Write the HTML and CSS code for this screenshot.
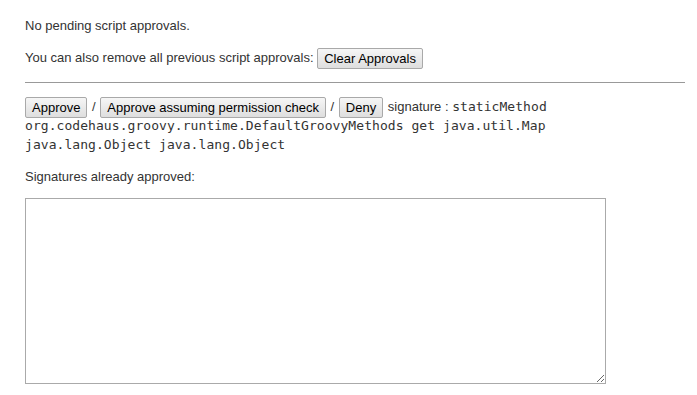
FILE: index.html
```html
<!DOCTYPE html>
<html>
<head>
<meta charset="utf-8">
<link rel="stylesheet" href="styles.css">
</head>
<body>
<div class="page">
  <p class="msg first">No pending script approvals.</p>
  <p class="msg second">You can also remove all previous script approvals: <button class="btn">Clear Approvals</button></p>
  <hr class="rule">
  <div class="pending">
    <button class="btn lead">Approve</button> / <button class="btn">Approve assuming permission check</button> / <button class="btn">Deny</button> signature : <code class="sig">staticMethod org.codehaus.groovy.runtime.DefaultGroovyMethods get java.util.Map java.lang.Object java.lang.Object</code>
  </div>
  <p class="msg label">Signatures already approved:</p>
  <textarea class="approved" readonly></textarea>
</div>
</body>
</html>
```
FILE: styles.css
```css
html, body {
  margin: 0;
  padding: 0;
  background: #fff;
}
.page {
  padding: 17px 12px 0 25px;
  font-family: "Liberation Sans", Arial, sans-serif;
  font-size: 13px;
  color: #333;
}
.msg {
  margin: 0;
  line-height: 18px;
}
.first {
  margin-bottom: 12px;
}
.second {
  line-height: 22px;
}
.btn {
  font-family: "Liberation Sans", Arial, sans-serif;
  font-size: 13px;
  color: #000;
  padding: 1px 6px;
  margin: 0 1px;
  border: 1px solid #a9a9a9;
  border-radius: 2px;
  background: linear-gradient(#f6f6f6, #dedede);
  height: 21px;
  vertical-align: middle;
}
.second .btn {
  margin: 0;
}
.rule {
  border: 0;
  border-top: 1px solid #999;
  margin: 13px 0 14px 0;
}
.pending {
  width: 560px;
  line-height: 19px;
}
.pending .btn {
  margin-top: -2px;
  margin-bottom: -2px;
}
.pending .lead {
  margin-left: 0;
}
.sig {
  font-family: "DejaVu Sans Mono", monospace;
  font-size: 13px;
  letter-spacing: 0.06px;
  color: #333;
}
.label {
  margin-top: 14px;
  margin-bottom: 12px;
}
.approved {
  display: block;
  width: 581px;
  height: 186px;
  box-sizing: border-box;
  border: 1px solid #aaa;
  margin: 0;
}
```
